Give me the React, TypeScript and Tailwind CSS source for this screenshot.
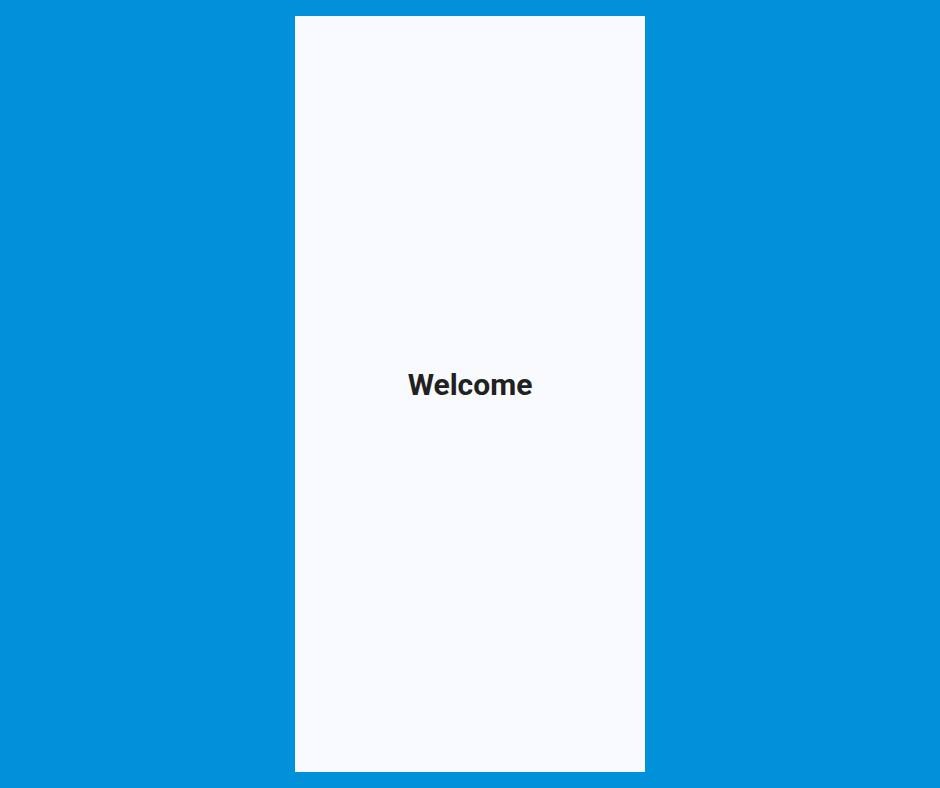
export default function App() {
  return (
    <div className="flex h-[788px] w-full items-center justify-center bg-[#0091da] py-4">
      <div className="flex h-full w-[350px] items-center justify-center bg-[#f8fafd] pb-5">
        <h1 className="font-['Roboto',sans-serif] text-[30px] font-bold text-[#212121]">Welcome</h1>
      </div>
    </div>
  );
}
